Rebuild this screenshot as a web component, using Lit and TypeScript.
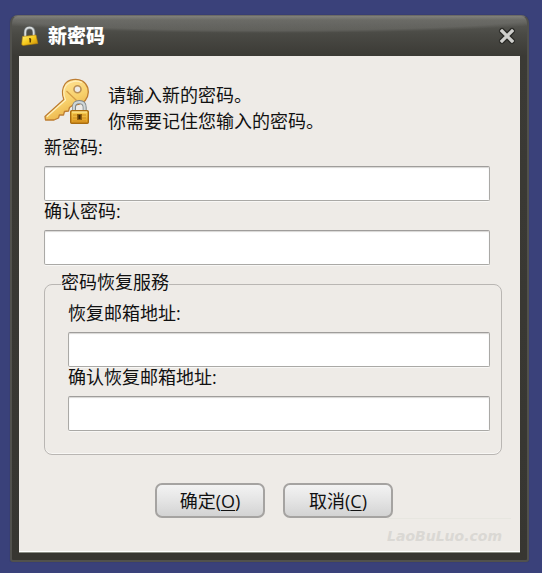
import { LitElement, html, css, svg } from "lit";
import { customElement, property } from "lit/decorators.js";

const sans = css`"Open Sans", "Noto Sans CJK SC", sans-serif`;

const titleLock = svg`
  <svg viewBox="0 0 18 20" width="18" height="20" aria-hidden="true">
    <defs>
      <linearGradient id="tl" x1="0" y1="0" x2="1" y2="1">
        <stop offset="0" stop-color="#fff07a" />
        <stop offset="0.5" stop-color="#f5c91c" />
        <stop offset="1" stop-color="#c98a08" />
      </linearGradient>
    </defs>
    <path d="M4.3 11V6.5C4.3 3.500 6 1.700 8.600 1.700S12.900 3.500 12.900 6.500V10" fill="none" stroke="#7f8588" stroke-width="3" />
    <path d="M4.200 11V6.500C4.200 3.500 6 1.600 8.500 1.600S12.700 3.500 12.700 6.500V10" fill="none" stroke="#d9dddd" stroke-width="1.600" />
    <path d="M1.500 10.500L15 9L16.800 17.500L2 19.500L0.700 18.500Z" fill="url(#tl)" stroke="#b98508" stroke-width="0.600" />
    <path d="M8 12.200a1.400 1.400 0 0 1 2.200 1.300l-.3 3h-1.400l-.1-2.600z" fill="#5a3d04" />
  </svg>`;

const keyIcon = svg`
  <svg viewBox="0 0 48 48" width="48" height="48" aria-hidden="true">
    <defs>
      <linearGradient id="kg" x1="0.300" y1="0" x2="0.800" y2="1">
        <stop offset="0" stop-color="#ffe49a" />
        <stop offset="0.500" stop-color="#f8d16c" />
        <stop offset="1" stop-color="#e3a437" />
      </linearGradient>
      <linearGradient id="lg" x1="0" y1="0" x2="0" y2="1">
        <stop offset="0" stop-color="#fad65c" />
        <stop offset="1" stop-color="#e0981a" />
      </linearGradient>
    </defs>
    <path
      d="M19.800 21.500C18 16.500 18 10.500 21 6C24.500 1 33 0.300 38.500 3C44 6.500 45.500 13 43.500 18.500C41.500 24 36 27.500 29 27L25.500 29.500L24.500 33L20.500 33.500L19.500 37L15.500 36.800L14.500 40L10 42H1.500L1 38.500Z"
      fill="url(#kg)" stroke="#bd7d32" stroke-width="1.300" stroke-linejoin="round" />
    <path d="M2.800 38.800L21.500 22C19.300 17 19.500 11 22.300 7.200C26 2.800 33 2.200 37.800 4.500" fill="none" stroke="#fff0bd" stroke-width="1.200" />
    <path d="M22.500 13L32.500 22.500" stroke="#d39c46" stroke-width="1.200" fill="none" />
    <circle cx="33.500" cy="11.300" r="3.500" fill="#eeebe7" stroke="#b99056" stroke-width="1.600" />
    <path d="M30 33V29.500C30 26 32 24 35.300 24S40.700 26 40.700 29.500V33" fill="none" stroke="#7f8689" stroke-width="4" />
    <path d="M29.800 33V29.500C29.800 26 32 24.200 35.300 24.200S40.600 26 40.600 29.500V33" fill="none" stroke="#cfd6d8" stroke-width="2.200" />
    <rect x="26.700" y="32.700" width="17.600" height="12.600" rx="1" fill="url(#lg)" stroke="#a96c10" stroke-width="1.400" />
    <path d="M28 34H43" stroke="#ffe79a" stroke-width="1" />
    <path d="M29 37H42M29 40H42M29 43H42" stroke="#cf8d22" stroke-width="1" />
    <rect x="33" y="36" width="5" height="6" fill="#94600f" />
    <rect x="34.500" y="37" width="2" height="4" fill="#3d2806" />
  </svg>`;

@customElement("password-field")
class PasswordField extends LitElement {
  @property() label = "";
  @property() type = "password";

  static styles = css`
    :host {
      display: block;
    }
    .label {
      display: block;
      padding-bottom: 9px;
      font: 18px/20px ${sans};
    }
    .input {
      display: block;
      box-sizing: border-box;
      width: 100%;
      height: 35px;
      margin: 0;
      padding: 0 8px;
      border: 1px solid #aaa9a6;
      border-top-color: #9f9d9b;
      border-radius: 2px;
      background: #fff;
      box-shadow: inset 0 1px 1px #d8d6d4, 0 1px 0 #f8f7f5;
      font: 18px/20px ${sans};
      outline: none;
    }
    .input:focus {
      border-color: #6f7f9f;
    }
  `;

  render() {
    return html`
      <label class="label" for="field">${this.label}</label>
      <input class="input" id="field" type=${this.type} />
    `;
  }
}

@customElement("app-root")
class AppRoot extends LitElement {
  static styles = css`
    :host {
      display: flex;
      box-sizing: border-box;
      min-height: 100vh;
      padding: 15px 13px 11px 10px;
      background: #3a417a;
      color: #111;
      font: 18px/20px ${sans};
    }
    .window {
      flex: 1;
      min-width: 0;
      display: flex;
      flex-direction: column;
      padding: 0 7px 7px;
      border: 2px solid #51514d;
      border-top: 1px solid #6b6a65;
      border-radius: 8px 8px 3px 3px;
      background:
        radial-gradient(ellipse 62% 17px at 50% 0, rgba(255, 255, 255, 0.1) 85%, transparent),
        linear-gradient(#73736d 0, #5a5a55 4px, #4a4a45 18px, #3b3a35 40px, #373631);
      box-shadow: 0 0 1px #2b2d45;
    }
    .titlebar {
      display: flex;
      align-items: center;
      height: 40px;
      padding: 0 4px 0 2px;
    }
    .titlebar svg {
      display: block;
    }
    .title {
      flex: 1;
      margin: 0;
      padding-left: 9px;
      color: #fff;
      font: 900 19px/26px ${sans};
    }
    .close {
      display: block;
      padding: 0;
      border: 0;
      background: none;
      cursor: pointer;
    }
    .body {
      flex: 1;
      display: flex;
      flex-direction: column;
      padding: 22px 18px 5px 25px;
      border-bottom: 1px solid #8b8e84;
      background: #eeebe7;
      box-shadow: inset 0 -1px 0 #fff;
    }
    .intro {
      display: flex;
      gap: 16px;
      padding-bottom: 3px;
    }
    .intro p {
      margin: 4px 0 0;
      line-height: 26px;
    }
    .main-fields {
      padding-right: 12px;
    }
    .group {
      min-width: 0;
      margin: 7px 0 0;
      padding: 7px 11px 23px 23px;
      border: 1px solid #b9b6b3;
      border-radius: 8px;
      box-shadow: inset 0 -1px 0 #f8f7f5;
    }
    .legend {
      margin-left: -7px;
      padding: 0 0 4px;
    }
    .actions {
      display: flex;
      justify-content: center;
      gap: 18px;
      padding: 28px 0 0 2px;
    }
    .button {
      width: 110px;
      height: 35px;
      padding: 0;
      border: 2px solid #a5a3a1;
      border-radius: 7px;
      background: linear-gradient(#f3f3f3, #e4e4e4 50%, #d3d3d3);
      color: #111;
      font: 18px/20px ${sans};
      cursor: pointer;
    }
    .button u {
      text-underline-offset: 2px;
    }
    .footer {
      align-self: flex-end;
      margin: auto -9px 0 0;
      padding: 6px 9px 0 0;
      border-top: 1px solid #e7e6e0;
      color: #dad8d4;
      font: italic bold 14px/22px "DejaVu Sans", sans-serif;
      text-align: right;
    }
  `;

  render() {
    return html`
      <main class="window">
        <header class="titlebar">
          ${titleLock}
          <h1 class="title">新密码</h1>
          <button class="close" type="button" aria-label="关闭">
            <svg viewBox="0 0 18 18" width="18" height="18">
              <path d="M4 4L14 14M14 4L4 14" stroke="#292925" stroke-width="6" stroke-linecap="round" />
              <path d="M4 4L14 14M14 4L4 14" stroke="#cfcfcc" stroke-width="3.300" stroke-linecap="square" />
            </svg>
          </button>
        </header>
        <form class="body">
          <div class="intro">
            ${keyIcon}
            <p>请输入新的密码。<br />你需要记住您输入的密码。</p>
          </div>
          <div class="main-fields">
            <password-field label="新密码:"></password-field>
            <password-field label="确认密码:"></password-field>
          </div>
          <fieldset class="group">
            <legend class="legend">密码恢复服務</legend>
            <password-field type="email" label="恢复邮箱地址:"></password-field>
            <password-field type="email" label="确认恢复邮箱地址:"></password-field>
          </fieldset>
          <div class="actions">
            <button class="button" type="button">确定(<u>O</u>)</button>
            <button class="button" type="button">取消(<u>C</u>)</button>
          </div>
          <div class="footer">LaoBuLuo.com</div>
        </form>
      </main>
    `;
  }
}
